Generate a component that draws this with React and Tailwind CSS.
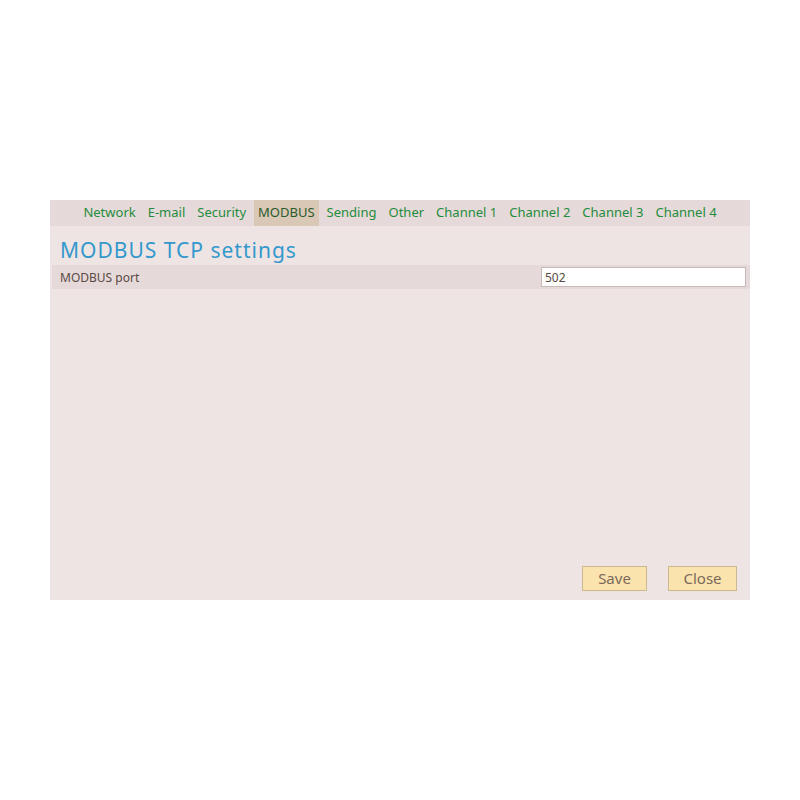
import React from 'react';

const tabs = ['Network', 'E-mail', 'Security', 'MODBUS', 'Sending', 'Other', 'Channel 1', 'Channel 2', 'Channel 3', 'Channel 4'];

export default function App() {
  return (
    <div className="w-[800px] h-[800px] bg-white pt-[200px] pl-[50px] font-['Noto_Sans',sans-serif]">
      <div className="w-[700px] h-[400px] bg-[#efe4e4] flex flex-col">
        {/* tab bar */}
        <div className="h-[26px] bg-[#e6d9d9] flex justify-center items-stretch gap-[4px]">
          {tabs.map((tab) => (
            <div
              key={tab}
              className={
                'px-[4px] flex items-center text-[13px] ' +
                (tab === 'MODBUS' ? 'bg-[#d9c8b6] text-[#2b5a2b]' : 'text-[#1e8c3c]')
              }
            >
              {tab}
            </div>
          ))}
        </div>

        <h1 className="mt-[10px] ml-[10px] h-[28px] text-[21px] leading-[28px] tracking-[1px] text-[#3399cc]">
          MODBUS TCP settings
        </h1>

        <div className="mt-[1px] ml-[2px] h-[24px] bg-[#e6d9d9] flex items-center justify-between pl-[8px] pr-[4px]">
          <span className="text-[12px] text-[#5a4a44] pt-[1px]">MODBUS port</span>
          <input
            defaultValue="502"
            className="w-[205px] h-[20px] bg-white border border-[#c9b9b9] px-[3px] text-[12px] text-[#5a4a44] outline-none"
          />
        </div>

        <div className="flex-1" />

        <div className="flex justify-end gap-[21px] pr-[13px] pb-[9px]">
          <button className="w-[65px] h-[25px] bg-[#fbe3ad] border border-[#cdb98f] text-[15px] text-[#7a6a5a]">
            Save
          </button>
          <button className="w-[69px] h-[25px] bg-[#fbe3ad] border border-[#cdb98f] text-[15px] text-[#7a6a5a]">
            Close
          </button>
        </div>
      </div>
    </div>
  );
}
